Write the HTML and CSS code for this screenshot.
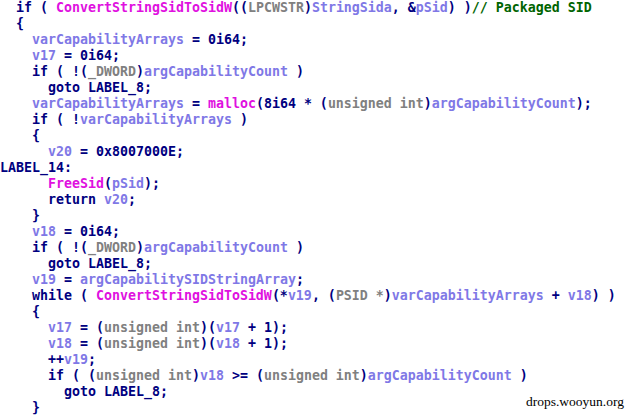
FILE: index.html
```html
<!DOCTYPE html>
<html>
<head>
<meta charset="utf-8">
<link rel="stylesheet" href="styles.css">
</head>
<body>
<div class="code">
<div class="ln">  <span class="k">if ( </span><span class="f">ConvertStringSidToSidW</span><span class="k">((</span><span class="t">LPCWSTR</span><span class="k">)</span><span class="v">StringSida</span><span class="k">, &amp;</span><span class="v">pSid</span><span class="k">) )</span><span class="c">// Packaged SID</span></div>
<div class="ln">  <span class="k">{</span></div>
<div class="ln">    <span class="v">varCapabilityArrays</span><span class="k"> = 0i64;</span></div>
<div class="ln">    <span class="v">v17</span><span class="k"> = 0i64;</span></div>
<div class="ln">    <span class="k">if ( !(</span><span class="t">_DWORD</span><span class="k">)</span><span class="v">argCapabilityCount</span><span class="k"> )</span></div>
<div class="ln">      <span class="k">goto LABEL_8;</span></div>
<div class="ln">    <span class="v">varCapabilityArrays</span><span class="k"> = </span><span class="f">malloc</span><span class="k">(8i64 * (</span><span class="t">unsigned int</span><span class="k">)</span><span class="v">argCapabilityCount</span><span class="k">);</span></div>
<div class="ln">    <span class="k">if ( !</span><span class="v">varCapabilityArrays</span><span class="k"> )</span></div>
<div class="ln">    <span class="k">{</span></div>
<div class="ln">      <span class="v">v20</span><span class="k"> = 0x8007000E;</span></div>
<div class="ln"><span class="k">LABEL_14:</span></div>
<div class="ln">      <span class="f">FreeSid</span><span class="k">(</span><span class="v">pSid</span><span class="k">);</span></div>
<div class="ln">      <span class="k">return </span><span class="v">v20</span><span class="k">;</span></div>
<div class="ln">    <span class="k">}</span></div>
<div class="ln">    <span class="v">v18</span><span class="k"> = 0i64;</span></div>
<div class="ln">    <span class="k">if ( !(</span><span class="t">_DWORD</span><span class="k">)</span><span class="v">argCapabilityCount</span><span class="k"> )</span></div>
<div class="ln">      <span class="k">goto LABEL_8;</span></div>
<div class="ln">    <span class="v">v19</span><span class="k"> = </span><span class="v">argCapabilitySIDStringArray</span><span class="k">;</span></div>
<div class="ln">    <span class="k">while ( </span><span class="f">ConvertStringSidToSidW</span><span class="k">(*</span><span class="v">v19</span><span class="k">, (</span><span class="t">PSID *</span><span class="k">)</span><span class="v">varCapabilityArrays</span><span class="k"> + </span><span class="v">v18</span><span class="k">) )</span></div>
<div class="ln">    <span class="k">{</span></div>
<div class="ln">      <span class="v">v17</span><span class="k"> = (</span><span class="t">unsigned int</span><span class="k">)(</span><span class="v">v17</span><span class="k"> + 1);</span></div>
<div class="ln">      <span class="v">v18</span><span class="k"> = (</span><span class="t">unsigned int</span><span class="k">)(</span><span class="v">v18</span><span class="k"> + 1);</span></div>
<div class="ln">      <span class="k">++</span><span class="v">v19</span><span class="k">;</span></div>
<div class="ln">      <span class="k">if ( (</span><span class="t">unsigned int</span><span class="k">)</span><span class="v">v18</span><span class="k"> &gt;= (</span><span class="t">unsigned int</span><span class="k">)</span><span class="v">argCapabilityCount</span><span class="k"> )</span></div>
<div class="ln">        <span class="k">goto LABEL_8;</span></div>
<div class="ln">    <span class="k">}</span></div>
</div>
<div class="mark">drops.wooyun.org</div>
</body>
</html>
```

FILE: styles.css
```css
html, body {
  margin: 0;
  padding: 0;
  background: #ffffff;
}
body {
  width: 629px;
  height: 415px;
  overflow: hidden;
  position: relative;
}
.code {
  font-family: "DejaVu Sans Mono", "Liberation Mono", monospace;
  font-weight: bold;
  font-size: 13.29px;
  line-height: 16px;
  color: #000080;
}
.ln {
  white-space: pre;
  height: 16px;
}
.k { color: #000080; }
.f { color: #e010e0; }
.v { color: #7f78e6; }
.t { color: #808080; }
.c { color: #006400; }
.mark {
  position: absolute;
  right: 5px;
  top: 394px;
  font-family: "Liberation Serif", serif;
  font-size: 13.5px;
  color: #000000;
}
```
